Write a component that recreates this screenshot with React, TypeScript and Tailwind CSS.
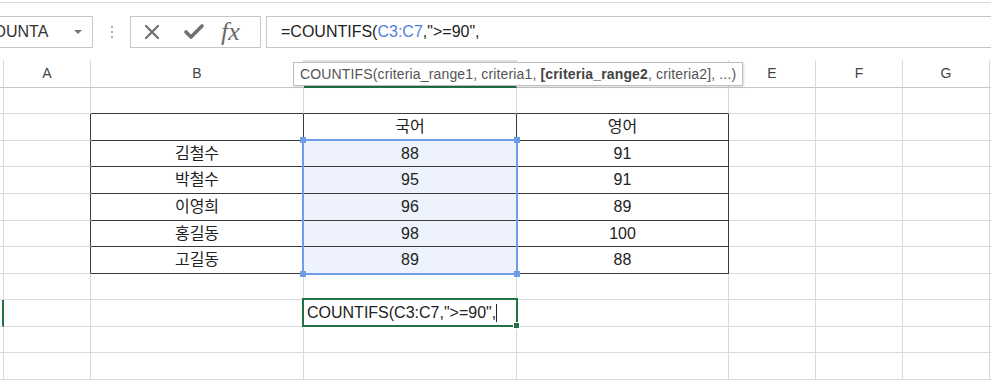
import { X, Check } from 'lucide-react';

const colW = ['w-[4px]', 'w-[87px]', 'w-[213px]', 'w-[213px]', 'w-[212px]', 'w-[87px]', 'w-[87px]', 'w-[87px]'];
const rowH = ['h-[26px]', 'h-[27px]', 'h-[26px]', 'h-[27px]', 'h-[27px]', 'h-[26px]', 'h-[27px]', 'h-[26px]', 'h-[27px]', 'h-[26px]', 'h-[27px]'];
const letters = ['', 'A', 'B', 'C', 'D', 'E', 'F', 'G'];

// row number -> { col index: text }
const data: Record<number, Record<number, string>> = {
  2: { 3: '국어', 4: '영어' },
  3: { 2: '김철수', 3: '88', 4: '91' },
  4: { 2: '박철수', 3: '95', 4: '91' },
  5: { 2: '이영희', 3: '96', 4: '89' },
  6: { 2: '홍길동', 3: '98', 4: '100' },
  7: { 2: '고길동', 3: '89', 4: '88' },
};

const inTable = (r: number, c: number) => r >= 2 && r <= 7 && c >= 2 && c <= 4;

function Cell({ r, c }: { r: number; c: number }) {
  const rightDark = inTable(r, c) || inTable(r, c + 1);
  const bottomDark = inTable(r, c) || inTable(r + 1, c);
  const selected = r >= 3 && r <= 7 && c === 3;
  const stubActive = c === 0 && r === 9;
  const text = data[r]?.[c];
  return (
    <div
      className={[
        c < 8 ? colW[c] : 'flex-1',
        'shrink-0 h-full flex items-center justify-center border-b',
        c < 8 ? (stubActive ? 'border-r-2 border-r-[#217346]' : 'border-r') : '',
        !stubActive ? (rightDark ? 'border-r-[#3a3a3a]' : 'border-r-[#dadada]') : '',
        bottomDark ? 'border-b-[#3a3a3a]' : 'border-b-[#dadada]',
        selected ? 'bg-[#edf2fc]' : '',
      ].join(' ')}
    >
      {text && <span className="text-[16px] text-[#222]">{text}</span>}
    </div>
  );
}

export default function App() {
  return (
    <div className="relative w-[991px] h-[380px] overflow-hidden bg-white font-['Liberation_Sans','Noto_Sans_CJK_KR',sans-serif]">
      {/* toolbar */}
      <div className="h-[60px]">
        <div className="h-[2px]" />
        <div className="h-px bg-[#d9d9d9]" />
        <div className="mt-[13px] h-[32px] flex items-stretch">
          <div className="w-[93px] border border-l-0 border-[#c6c6c6] flex items-center overflow-hidden relative">
            <span className="ml-[-18px] text-[16px] text-[#333] whitespace-nowrap">COUNTA</span>
            <span className="absolute left-[74px] top-[13px] w-0 h-0 border-l-[4px] border-r-[4px] border-t-[4px] border-l-transparent border-r-transparent border-t-[#777]" />
          </div>
          <div className="w-[37px] flex flex-col items-center justify-center gap-[3px]">
            <span className="w-[2px] h-[2px] bg-[#aaa]" />
            <span className="w-[2px] h-[2px] bg-[#aaa]" />
            <span className="w-[2px] h-[2px] bg-[#aaa]" />
          </div>
          <div className="w-[131px] border border-[#c6c6c6] flex items-center">
            <X className="ml-[9px] text-[#707070]" size={24} strokeWidth={2.2} />
            <Check className="ml-[18px] text-[#707070]" size={24} strokeWidth={3.6} />
            <span className="ml-[15px] font-['Liberation_Serif',serif] italic text-[26px] text-[#6a6a6a] leading-none">fx</span>
          </div>
          <div className="w-[5px]" />
          <div className="flex-1 border border-r-0 border-[#c6c6c6] flex items-center pl-[14px] text-[16px] text-[#222] whitespace-nowrap">
            <span>
              =COUNTIFS(<span className="text-[#4f7fd8]">C3:C7</span>,"&gt;=90",
            </span>
          </div>
        </div>
      </div>

      {/* sheet */}
      <div className="relative">
        <div className="h-[28px] flex">
          {letters.map((l, i) => (
            <div
              key={i}
              className={[
                colW[i],
                'shrink-0 h-full flex items-center justify-center border-r border-r-[#dadada] text-[14px] text-[#444]',
                i === 3 ? 'bg-[#e1e1e1] border-b-2 border-b-[#217346]' : 'border-b border-b-[#c8c8c8]',
              ].join(' ')}
            >
              {l}
            </div>
          ))}
          <div className="flex-1 border-b border-b-[#c8c8c8]" />
        </div>
        {rowH.map((h, idx) => {
          const r = idx + 1;
          return (
            <div key={r} className={`${h} flex`}>
              {[0, 1, 2, 3, 4, 5, 6, 7, 8].map((c) => (
                <Cell key={c} r={r} c={c} />
              ))}
            </div>
          );
        })}

        {/* selected range C3:C7 */}
        <div className="absolute left-[302px] top-[79px] w-[216px] h-[136px] border-2 border-[#6f9de9] pointer-events-none">
          <span className="absolute -left-[4px] -top-[4px] w-[6px] h-[6px] bg-[#6f9de9]" />
          <span className="absolute -right-[4px] -top-[4px] w-[6px] h-[6px] bg-[#6f9de9]" />
          <span className="absolute -left-[4px] -bottom-[4px] w-[6px] h-[6px] bg-[#6f9de9]" />
          <span className="absolute -right-[4px] -bottom-[4px] w-[6px] h-[6px] bg-[#6f9de9]" />
        </div>

        {/* active cell C9 */}
        <div className="absolute left-[302px] top-[238px] w-[216px] h-[29px] border-2 border-[#217346] bg-white flex items-center pl-[3px]">
          <span className="text-[16px] text-[#222] whitespace-nowrap">COUNTIFS(C3:C7,"&gt;=90",</span>
          <span className="w-px h-[18px] bg-[#222]" />
          <span className="absolute -right-[4px] -bottom-[4px] w-[7px] h-[7px] bg-[#217346] border border-white" />
        </div>
      </div>

      {/* function tooltip */}
      <div className="absolute left-[293px] top-[62px] h-[24px] px-[6px] flex items-center bg-white border border-[#bfbfbf] shadow-[1px_1px_2px_rgba(0,0,0,0.15)] text-[14px] tracking-[0.15px] text-[#555] whitespace-nowrap">
        <span>
          COUNTIFS(criteria_range1, criteria1, <b className="font-bold text-[#444]">[criteria_range2</b>, criteria2], ...)
        </span>
      </div>
    </div>
  );
}
